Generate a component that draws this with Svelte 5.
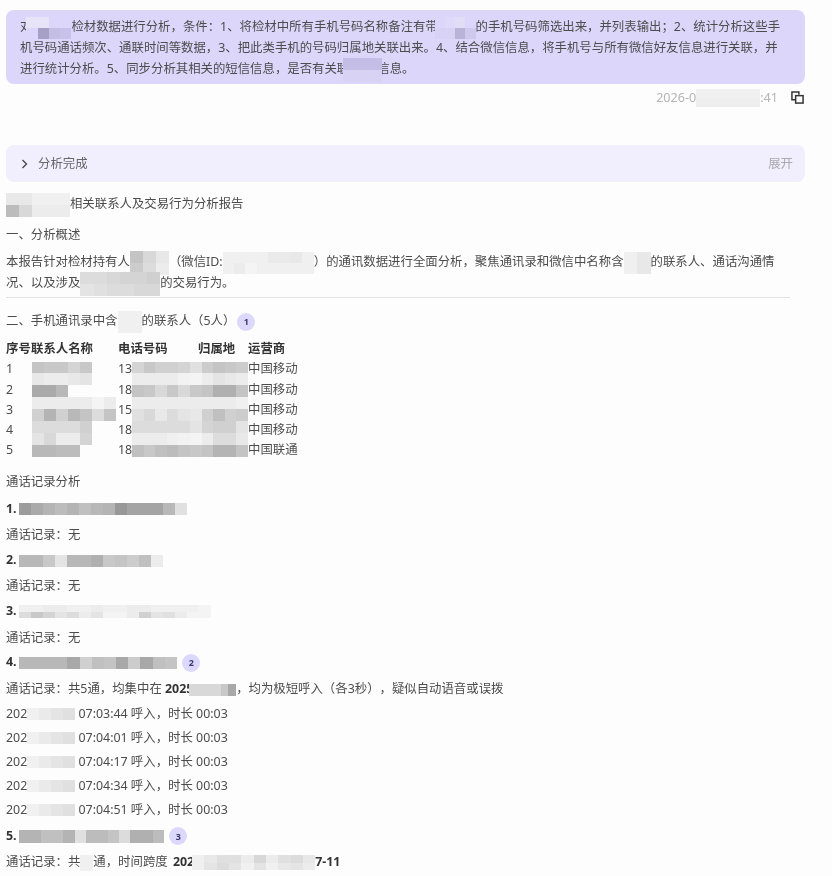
<script>
  // redacted bits are grey mosaics: each row is a list of cell shades, "-" leaves a hole
  const shade = (c) => (c === '-' ? 'transparent' : c.length === 2 ? `#${c}${c}${c}` : `#${c}`);
  const parse = (rows) => rows.map((r) => r.split(' ').map(shade));

  const contacts = [
    { no: 1, phone: '13', carrier: '中国移动' },
    { no: 2, phone: '18', carrier: '中国移动' },
    { no: 3, phone: '15', carrier: '中国移动' },
    { no: 4, phone: '18', carrier: '中国移动' },
    { no: 5, phone: '18', carrier: '中国联通' }
  ];

  const calls = ['07:03:44', '07:04:01', '07:04:17', '07:04:34', '07:04:51'];

  const nameCover = [
    'c4 c8 c8 d4 c8 - -',
    'e8 ec ec e8 e4 - -',
    'aa aa b8 - - - -',
    'ec ec ec ec ec f4 ec',
    'd0 b4 d0 b8 c4 dc c4',
    'dc dc dc dc d0 - -',
    'e4 d8 ec ec d4 - -',
    'b8 b8 bc bc - - -'
  ];
  const phoneCover = [
    'd4 c8 d0 d0 d4 e0 cc c4 c8 cc',
    'ec ec ec ec f2 f4 ec e4 e8 ec',
    'c4 c8 d8 c8 d8 c8 c4 b0 b0 c4',
    'ec ec ec ec ec ec ec ec ec f0',
    'e0 d8 e8 dc e4 e8 d0 c0 d0 cc',
    'dc dc dc dc dc e4 d4 d0 d0 e4',
    'ec ec ec f0 f2 f4 ec dc dc e8',
    'c0 c8 c0 bc c4 c8 c4 b4 b4 c4'
  ];
</script>

{#snippet mosaic(rows, cw = 12, ch = 12, ml = 0, mr = 0)}
  <span class="mosaic" style="margin-left:{ml}px;margin-right:{mr}px">
    {#each parse(rows) as row}
      <span class="mrow">
        {#each row as c}
          <span style="width:{cw}px;height:{ch}px;background:{c}"></span>
        {/each}
      </span>
    {/each}
  </span>
{/snippet}

{#snippet badge(n)}
  <span class="badge">{n}</span>
{/snippet}

<main>
  <div class="bubble">
    对{@render mosaic(['e8e4f8 e8e4f8 dcd6fb dcd6fb', 'dcd6fb a69fc6 c4bde4 c8c2ea'], 11.25, 11, -6)}检材数据进行分析&#xFF0C;条件&#xFF1A;1、将检材中所有手机号码名称备注有带{@render mosaic(['dcd6fb dfd9fa e2ddf7 dcd6fb', 'd8d2f4 d8d2f4 bab3d8 cfc9ee'], 10.2, 11, -3)}的手机号码筛选出来&#xFF0C;并列表输出&#xFF1B;2、统计分析这些手<br />机号码通话频次、通联时间等数据&#xFF0C;3、把此类手机的号码归属地关联出来。4、结合微信信息&#xFF0C;将手机号与所有微信好友信息进行关联&#xFF0C;并<br />进行统计分析。5、同步分析其相关的短信信息&#xFF0C;是否有关联{@render mosaic(['c4bee6 c4bee6 c4bee6', 'd8d2f4 d8d2f4 d8d2f4'], 13, 12, -6, -5)}信息。
  </div>

  <div class="meta">
    <span class="time">2026-0{@render mosaic(['f0 f0 f0 f0 f0', 'ee ee ee ee ee'], 12.8, 9)}:41</span>
    <svg class="copy" viewBox="0 0 14 14" width="13" height="13" fill="none" stroke="#333" stroke-width="1.6">
      <path d="M4.5 9.5H1V1h7.5v3" />
      <rect x="5" y="5" width="8" height="8" />
    </svg>
  </div>

  <div class="fold">
    <div class="fold-left">
      <svg viewBox="0 0 8 10" width="8" height="10" fill="none" stroke="#444" stroke-width="1.3">
        <path d="M1.5 1l4 4-4 4" />
      </svg>
      <span>分析完成</span>
    </div>
    <span class="expand">展开</span>
  </div>

  <p class="title">{@render mosaic(['e8 e8 f0 f0 f0', 'bc d8 ec ec ec'], 12.8, 12)}相关联系人及交易行为分析报告</p>
  <p class="h1">一、分析概述</p>
  <p class="intro">
    本报告针对检材持有人{@render mosaic(['c4 d8 e8', 'cc dc ec'], 13, 12)}&#xFF08;微信ID:{@render mosaic(['f0 f0 f0 f0 ea ea e8 f0', 'f0 ec f4 f0 f0 f0 f0 f0'], 11.4, 11)}&#xFF09;的通讯数据进行全面分析&#xFF0C;聚焦通讯录和微信中名称含{@render mosaic(['f0 e8', 'f0 e8'], 13.5, 11)}的联系人、通话沟通情<br />况、以及涉及{@render mosaic(['dc dc d8 d4 d4 d0', 'e4 e0 dc dc d8 d8'], 13.3, 12)}的交易行为。
  </p>
  <hr />

  <p class="h2">二、手机通讯录中含{@render mosaic(['f0 f0'], 12, 22)}的联系人&#xFF08;5人&#xFF09;{@render badge(1)}</p>

  <div class="table-wrap">
    <table>
      <thead>
        <tr>
          <th class="c-no">序号</th>
          <th class="c-name">联系人名称</th>
          <th class="c-phone">电话号码</th>
          <th class="c-area">归属地</th>
          <th>运营商</th>
        </tr>
      </thead>
      <tbody>
        {#each contacts as c}
          <tr>
            <td>{c.no}</td>
            <td></td>
            <td>{c.phone}</td>
            <td></td>
            <td>{c.carrier}</td>
          </tr>
        {/each}
      </tbody>
    </table>
    <div class="cover name-cover">{@render mosaic(nameCover, 12, 11.9)}</div>
    <div class="cover phone-cover">{@render mosaic(phoneCover, 11.6, 11.9)}</div>
  </div>

  <p class="h3">通话记录分析</p>

  <p class="who">1.{@render mosaic(['9c aa b4 bc b4 c0 b8 b4 98 a4 a4 a4 b8 e0'], 12, 12, 2)}</p>
  <p>通话记录&#xFF1A;无</p>
  <p class="who">2.{@render mosaic(['b8 b8 c8 e4 b8 b8 b0 c8 c4 cc c0 ec'], 12, 12, 2)}</p>
  <p>通话记录&#xFF1A;无</p>
  <p class="who">3.{@render mosaic(['f0 f0 ec ec f0 f0 ec f0 f0 ec ec f0 f0 f0 f0 f4', 'dc c8 d4 e4 dc ec e4 f4 f4 ec d0 e4 e0 ec f4 f4'], 12, 6.5, 2)}</p>
  <p>通话记录&#xFF1A;无</p>
  <p class="who">4.{@render mosaic(['b8 b8 b8 b8 a8 d0 c0 c4 a8 cc a8 c0 c4'], 12.2, 12, 2)} {@render badge(2)}</p>
  <p>通话记录&#xFF1A;共5通&#xFF0C;均集中在 <b>2025</b>{@render mosaic(['d8 d8 d8 d8 c8 a8'], 7.8, 12, -4)}&#xFF0C;均为极短呼入&#xFF08;各3秒&#xFF09;&#xFF0C;疑似自动语音或误拨</p>

  {#each calls as t}
    <p class="call">202{@render mosaic(['f0 ea e4 e0'], 12, 12)} {t} 呼入&#xFF0C;时长 00:03</p>
  {/each}

  <p class="who last">5.{@render mosaic(['b4 b4 c0 c0 b4 e0 bc bc c4 dc b0 b0 bc'], 11.2, 13, 2)} {@render badge(3)}</p>
  <p>通话记录&#xFF1A;共{@render mosaic(['f0'], 13, 16)}通&#xFF0C;时间跨度 <b class="span-start">202</b>{@render mosaic(['f0 e8 e0 e0 ec d8 ec e0 dc e8', 'f0 e4 dc e4 f0 e4 f0 e8 e4 ec'], 12.3, 7.5, -2)}<b>7-11</b></p>
</main>

<style>
  :global(body) {
    margin: 0;
    background: #fdfdfe;
  }
  main {
    box-sizing: border-box;
    width: 832px;
    height: 876px;
    overflow: hidden;
    padding: 10px 27px 0 6px;
    font-family: "Noto Sans", "Noto Sans CJK SC", sans-serif;
    font-size: 12.4px;
    line-height: 21px;
    color: #4c4c4c;
    text-spacing-trim: space-all;
    filter: blur(0.25px);
  }
  b {
    color: #333;
  }
  .mosaic {
    display: inline-flex;
    flex-direction: column;
    vertical-align: middle;
    margin-top: -6px;
    margin-bottom: -6px;
    filter: blur(0.5px);
  }
  .mrow {
    display: flex;
  }
  .bubble {
    box-sizing: border-box;
    height: 74px;
    padding: 6px 14px;
    background: #dcd6fb;
    border-radius: 8px;
    white-space: nowrap;
  }
  .meta {
    display: flex;
    justify-content: flex-end;
    align-items: center;
    gap: 13px;
    height: 26px;
  }
  .time {
    font-size: 12.6px;
    color: #b4b4b4;
  }
  .copy {
    margin-right: 1px;
  }
  .fold {
    display: flex;
    justify-content: space-between;
    align-items: center;
    box-sizing: border-box;
    height: 37px;
    margin-top: 35px;
    padding: 0 12px 0 15px;
    background: #f1eefe;
    border-radius: 8px;
  }
  .fold-left {
    display: flex;
    align-items: center;
    gap: 9px;
    color: #666;
  }
  .expand {
    color: #aaa;
  }
  p {
    margin: 0 0 3.7px;
    white-space: nowrap;
  }
  .title {
    margin: 11px 0 10px;
  }
  .h1 {
    margin-bottom: 6px;
  }
  .intro {
    margin: 0;
  }
  hr {
    width: 784px;
    height: 1px;
    margin: 4px 0 12px;
    border: 0;
    background: #e2e2e4;
  }
  .h2 {
    margin-bottom: 8px;
  }
  .badge {
    display: inline-flex;
    justify-content: center;
    align-items: center;
    width: 18px;
    height: 18px;
    margin-left: 2px;
    border-radius: 50%;
    background: #dcd8fb;
    color: #3b3970;
    font-size: 9px;
    font-weight: 700;
    line-height: 1;
    vertical-align: middle;
  }
  .table-wrap {
    position: relative;
    margin-bottom: 10px;
  }
  table {
    border-collapse: collapse;
    table-layout: fixed;
    width: 330px;
  }
  th,
  td {
    height: 20.3px;
    padding: 0;
    line-height: 20.3px;
    text-align: left;
    font-weight: 700;
  }
  th {
    color: #333;
  }
  td {
    font-weight: 400;
  }
  .c-no {
    width: 25px;
  }
  .c-name {
    width: 87px;
  }
  .c-phone {
    width: 80px;
  }
  .c-area {
    width: 50px;
  }
  .cover {
    position: absolute;
    top: 22.5px;
  }
  .cover .mosaic {
    display: flex;
    margin-top: 0;
    margin-bottom: 0;
  }
  .name-cover {
    left: 26px;
  }
  .phone-cover {
    left: 126px;
  }
  .h3 {
    margin-bottom: 6px;
  }
  .who {
    margin-bottom: 5.5px;
    font-weight: 700;
    color: #333;
  }
  .call {
    margin-bottom: 3px;
  }
  .last {
    margin-top: 5px;
  }
  .span-start {
    margin-left: 2px;
  }
</style>
